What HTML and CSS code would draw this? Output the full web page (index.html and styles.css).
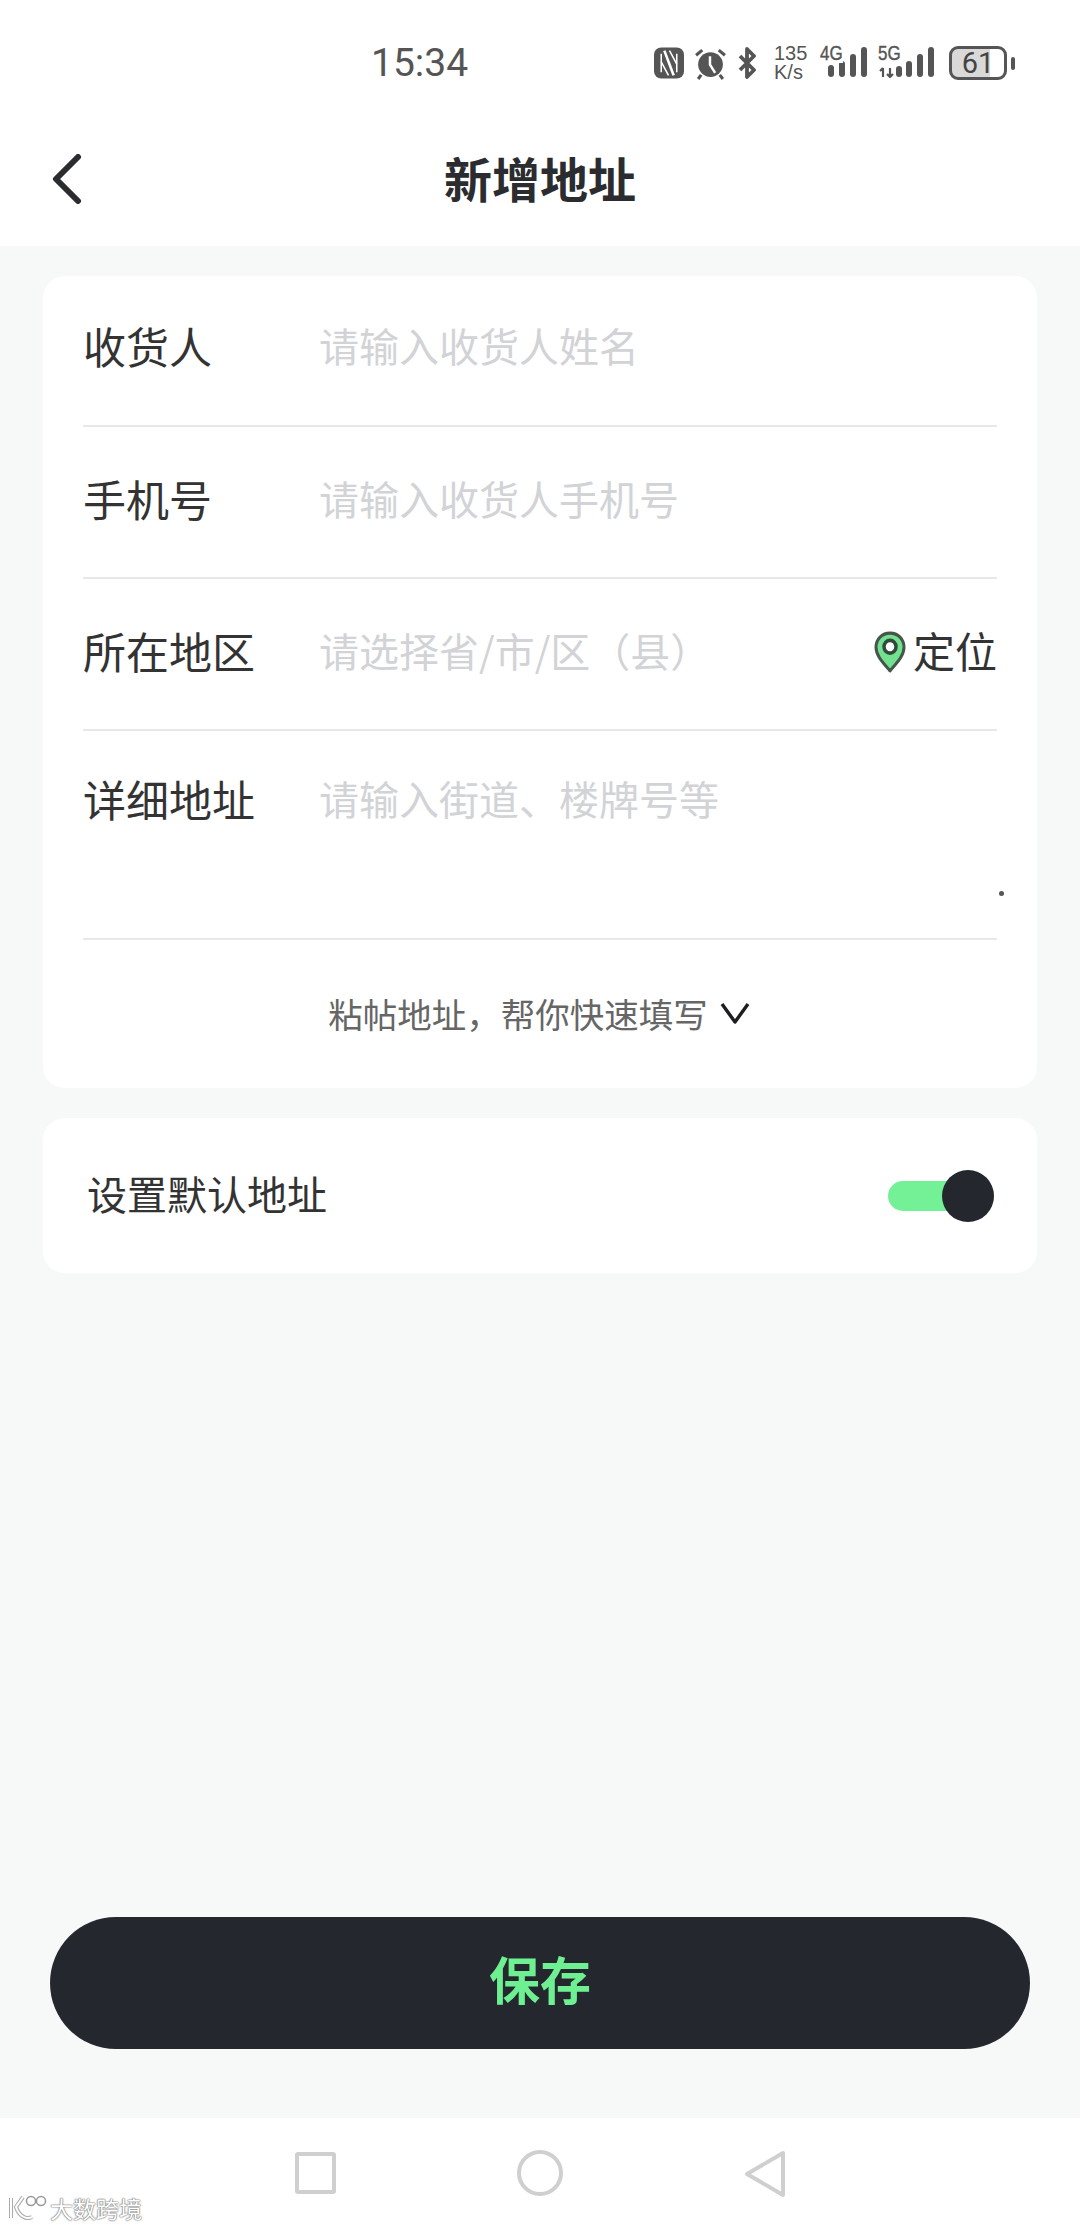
FILE: index.html
```html
<!DOCTYPE html>
<html lang="zh-CN">
<head>
    <meta charset="UTF-8">
    <meta name="viewport" content="width=device-width, initial-scale=1.0">
    <title>新增地址</title>
    <link rel="stylesheet" href="styles.css">
</head>
<body>
    <header class="top">
        <div class="status-bar">
            <span class="time">15:34</span>
            <div class="status-icons">
                <svg class="ic-nfc" width="30" height="32" viewBox="0 0 29 30">
                    <rect x="0" y="0" width="29" height="30" rx="7" fill="#555"/>
                    <path d="M7 6v18M22 6v18" stroke="#fff" stroke-width="1.500" fill="none"/>
                    <path d="M10 3l9 24" stroke="#fff" stroke-width="2.500" fill="none"/>
                    <path d="M15 3l7 13M7 14l7 13" stroke="#fff" stroke-width="1.500" fill="none"/>
                </svg>
                <svg class="ic-alarm" width="33" height="33" viewBox="0 0 32 32">
                    <circle cx="16" cy="17" r="12" fill="#555"/>
                    <path d="M15.500 9v8l5 8" stroke="#fff" stroke-width="2.400" fill="none"/>
                    <path d="M2 8l6-5M30 8l-6-5M7 27l-3 4M25 27l3 4" stroke="#555" stroke-width="3" fill="none"/>
                </svg>
                <svg class="ic-bt" width="18" height="32" viewBox="0 0 18 32">
                    <path d="M2 9l14 14-7 7V2l7 7L2 23" stroke="#555" stroke-width="3.800" fill="none" stroke-linejoin="round"/>
                </svg>
                <div class="speed"><span>135</span><span>K/s</span></div>
                <div class="signal">
                    <span class="net">4G</span>
                    <svg width="40" height="32" viewBox="0 0 40 32">
                        <rect x="0" y="19" width="6" height="12" rx="3" fill="#555"/>
                        <rect x="11" y="15" width="6" height="16" rx="3" fill="#555"/>
                        <rect x="22" y="8" width="6" height="23" rx="3" fill="#555"/>
                        <rect x="33" y="1" width="6" height="30" rx="3" fill="#555"/>
                    </svg>
                </div>
                <div class="signal signal-5g">
                    <span class="net">5G</span>
                    <svg width="58" height="32" viewBox="0 0 58 32">
                        <path d="M4 22v9M1 25l3-3M11 22v9M8 28l3 3 3-3" stroke="#555" stroke-width="2.200" fill="none"/>
                        <rect x="17" y="20" width="6" height="11" rx="3" fill="#555"/>
                        <rect x="27" y="15" width="6" height="16" rx="3" fill="#555"/>
                        <rect x="38" y="8" width="6" height="23" rx="3" fill="#555"/>
                        <rect x="49" y="1" width="6" height="30" rx="3" fill="#555"/>
                    </svg>
                </div>
                <div class="battery">
                    <div class="battery-body"><span>61</span></div>
                    <i class="battery-tip"></i>
                </div>
            </div>
        </div>
        <div class="nav-bar">
            <svg class="back" width="30" height="50" viewBox="0 0 30 50">
                <path d="M26 3L4 25l22 22" stroke="#2b2c30" stroke-width="6" fill="none" stroke-linecap="round" stroke-linejoin="round"/>
            </svg>
            <h1>新增地址</h1>
        </div>
    </header>

    <main class="content">
        <section class="card form-card">
            <div class="row row-first">
                <span class="label">收货人</span>
                <span class="hint">请输入收货人姓名</span>
            </div>
            <div class="row">
                <span class="label">手机号</span>
                <span class="hint">请输入收货人手机号</span>
            </div>
            <div class="row">
                <span class="label">所在地区</span>
                <span class="hint">请选择省/市/区（县）</span>
                <div class="locate">
                    <svg class="pin" width="32" height="42" viewBox="0 0 32 40" preserveAspectRatio="none">
                        <path d="M16 38C8 29 2 23 2 15.500C2 7.500 8 2 16 2s14 5.500 14 13.500C30 23 24 29 16 38z" fill="#72e08f" stroke="#44564b" stroke-width="3" stroke-linejoin="round"/>
                        <circle cx="16" cy="15" r="6" fill="#fff" stroke="#2f4a3a" stroke-width="3.500"/>
                    </svg>
                    <span>定位</span>
                </div>
            </div>
            <div class="row row-detail">
                <span class="label">详细地址</span>
                <span class="hint">请输入街道、楼牌号等</span>
                <i class="dot"></i>
            </div>
            <div class="paste">
                <span>粘帖地址，帮你快速填写</span>
                <svg width="30" height="24" viewBox="0 0 30 24">
                    <path d="M2 3l13 18L28 3" stroke="#1d1e22" stroke-width="3.400" fill="none" stroke-linejoin="round"/>
                </svg>
            </div>
        </section>

        <section class="card default-card">
            <span class="default-label">设置默认地址</span>
            <div class="switch"><i class="switch-knob"></i></div>
        </section>

        <div class="save-wrap">
            <button class="save"><span>保存</span></button>
        </div>
    </main>

    <footer class="sys-nav">
        <i class="nav-square"></i>
        <i class="nav-circle"></i>
        <svg width="42" height="48" viewBox="0 0 42 48">
            <path d="M39 3L3 24l36 21z" fill="none" stroke="#cfcfcf" stroke-width="4" stroke-linejoin="round"/>
        </svg>
    </footer>

    <div class="watermark">
        <svg width="42" height="28" viewBox="0 0 42 28">
            <path d="M3 4v20M15 3L8 13c3 9 10 13 16 10" stroke="#aaa" stroke-width="4" fill="none"/>
            <path d="M3 4v20M15 3L8 13c3 9 10 13 16 10" stroke="#fff" stroke-width="2" fill="none"/>
            <circle cx="23" cy="7" r="4.500" fill="#fff" stroke="#999" stroke-width="1.500"/>
            <circle cx="33" cy="7" r="4.500" fill="#fff" stroke="#999" stroke-width="1.500"/>
        </svg>
        <span>大数跨境</span>
    </div>
</body>
</html>
```

FILE: styles.css
```css
* {
    margin: 0;
    padding: 0;
    box-sizing: border-box;
}

body {
    position: relative;
    width: 1080px;
    height: 2228px;
    display: flex;
    flex-direction: column;
    overflow: hidden;
    background-color: #f7f9f8;
    color: #333;
    font-family: "Noto Sans CJK SC", "Noto Sans", sans-serif;
}

.top {
    height: 246px;
    background-color: #fff;
}

.status-bar {
    height: 90px;
    padding: 36px 65px 0 371px;
    display: flex;
    align-items: center;
    justify-content: space-between;
}

.time {
    font-family: Roboto, sans-serif;
    font-size: 39px;
    color: #555;
}

.status-icons {
    display: flex;
    align-items: center;
}

.ic-alarm {
    margin-left: 10px;
}

.ic-bt {
    margin-left: 11px;
}

.speed {
    margin-left: 18px;
    width: 34px;
    display: flex;
    flex-direction: column;
    font-family: "Liberation Sans", sans-serif;
    font-size: 20px;
    line-height: 19px;
    color: #555;
    white-space: nowrap;
}

.signal {
    position: relative;
    margin-left: 12px;
    width: 48px;
    height: 34px;
    display: flex;
    justify-content: flex-end;
}

.signal-5g {
    margin-left: 10px;
    width: 59px;
}

.net {
    position: absolute;
    left: 0;
    top: -3px;
    font-family: "Liberation Sans", sans-serif;
    font-size: 20px;
    line-height: 20px;
    color: #555;
    background-color: #fff;
    transform: scaleX(0.85);
    transform-origin: left top;
    -webkit-text-stroke: 0.4px #555;
}

.battery {
    margin-left: 12px;
    display: flex;
    align-items: center;
}

.battery-body {
    width: 58px;
    height: 34px;
    border: 3px solid #555;
    border-radius: 9px;
    background: linear-gradient(to right, #d9d9d9 74%, #fff 74%);
    text-align: center;
    font-family: Roboto, sans-serif;
    font-size: 29px;
    line-height: 28px;
    color: #444;
}

.battery-tip {
    margin-left: 4px;
    width: 4px;
    height: 13px;
    border-radius: 2px;
    background-color: #555;
}

.nav-bar {
    position: relative;
    height: 156px;
    padding-top: 18px;
    display: flex;
    align-items: center;
    justify-content: center;
}

.back {
    position: absolute;
    left: 52px;
    top: 64px;
}

.nav-bar h1 {
    font-size: 48px;
    font-weight: 700;
    line-height: 60px;
    color: #2b2c30;
}

.content {
    flex: 1;
    padding: 30px 43px 0 43px;
    display: flex;
    flex-direction: column;
}

.card {
    background-color: #fff;
    border-radius: 22px;
}

.form-card {
    height: 812px;
    padding: 0 40px 0 40px;
}

.row {
    position: relative;
    height: 152px;
    padding-bottom: 8px;
    display: flex;
    align-items: center;
    border-bottom: 2px solid #e8e8e8;
}

.row-first {
    height: 151px;
    padding-bottom: 11px;
}

.row-detail {
    height: 209px;
    align-items: flex-start;
    padding-top: 39px;
    padding-bottom: 0;
}

.label {
    width: 236px;
    flex-shrink: 0;
    font-size: 43px;
    line-height: 56px;
    color: #333;
}

.hint {
    flex: 1;
    font-size: 40px;
    line-height: 56px;
    color: #d2d3d6;
}

.locate {
    display: flex;
    align-items: center;
    gap: 7px;
    font-size: 42px;
    line-height: 56px;
    color: #333;
}

.pin {
    margin-top: 4px;
}

.dot {
    position: absolute;
    right: -7px;
    bottom: 42px;
    width: 5px;
    height: 5px;
    border-radius: 50%;
    background-color: #555;
}

.paste {
    height: 149px;
    padding-bottom: 4px;
    padding-right: 2px;
    display: flex;
    align-items: center;
    justify-content: center;
    gap: 12px;
    font-size: 34.500px;
    color: #666;
}

.default-card {
    margin-top: 30px;
    height: 155px;
    padding: 0 43px 6px 44px;
    display: flex;
    align-items: center;
    justify-content: space-between;
}

.default-label {
    font-size: 40px;
    color: #333;
}

.switch {
    position: relative;
    top: 3px;
    width: 106px;
    height: 30px;
    border-radius: 15px;
    background-color: #74f096;
}

.switch-knob {
    position: absolute;
    right: 0;
    top: -11px;
    width: 52px;
    height: 52px;
    border-radius: 50%;
    background-color: #25272e;
}

.save-wrap {
    margin-top: auto;
    padding: 0 7px 69px 7px;
}

.save {
    display: block;
    width: 100%;
    height: 132px;
    padding-bottom: 10px;
    border: none;
    border-radius: 66px;
    background-color: #25272e;
    color: #6ef092;
    font-family: inherit;
    font-size: 51px;
    font-weight: 700;
}

.sys-nav {
    height: 110px;
    padding: 32px 294px 0 295px;
    display: flex;
    align-items: flex-start;
    justify-content: space-between;
    background-color: #fff;
}

.nav-square {
    margin-top: 2px;
    width: 41px;
    height: 42px;
    border: 4px solid #cfcfcf;
    border-radius: 3px;
}

.nav-circle {
    width: 46px;
    height: 46px;
    border: 4px solid #cfcfcf;
    border-radius: 50%;
}

.watermark {
    position: absolute;
    left: 8px;
    top: 2194px;
    display: flex;
    align-items: center;
    gap: 0;
    font-size: 23px;
    line-height: 28px;
    color: #fff;
    text-shadow: 0 0 2px #777, 0 0 1px #777, 0 0 1px #777;
}
```
